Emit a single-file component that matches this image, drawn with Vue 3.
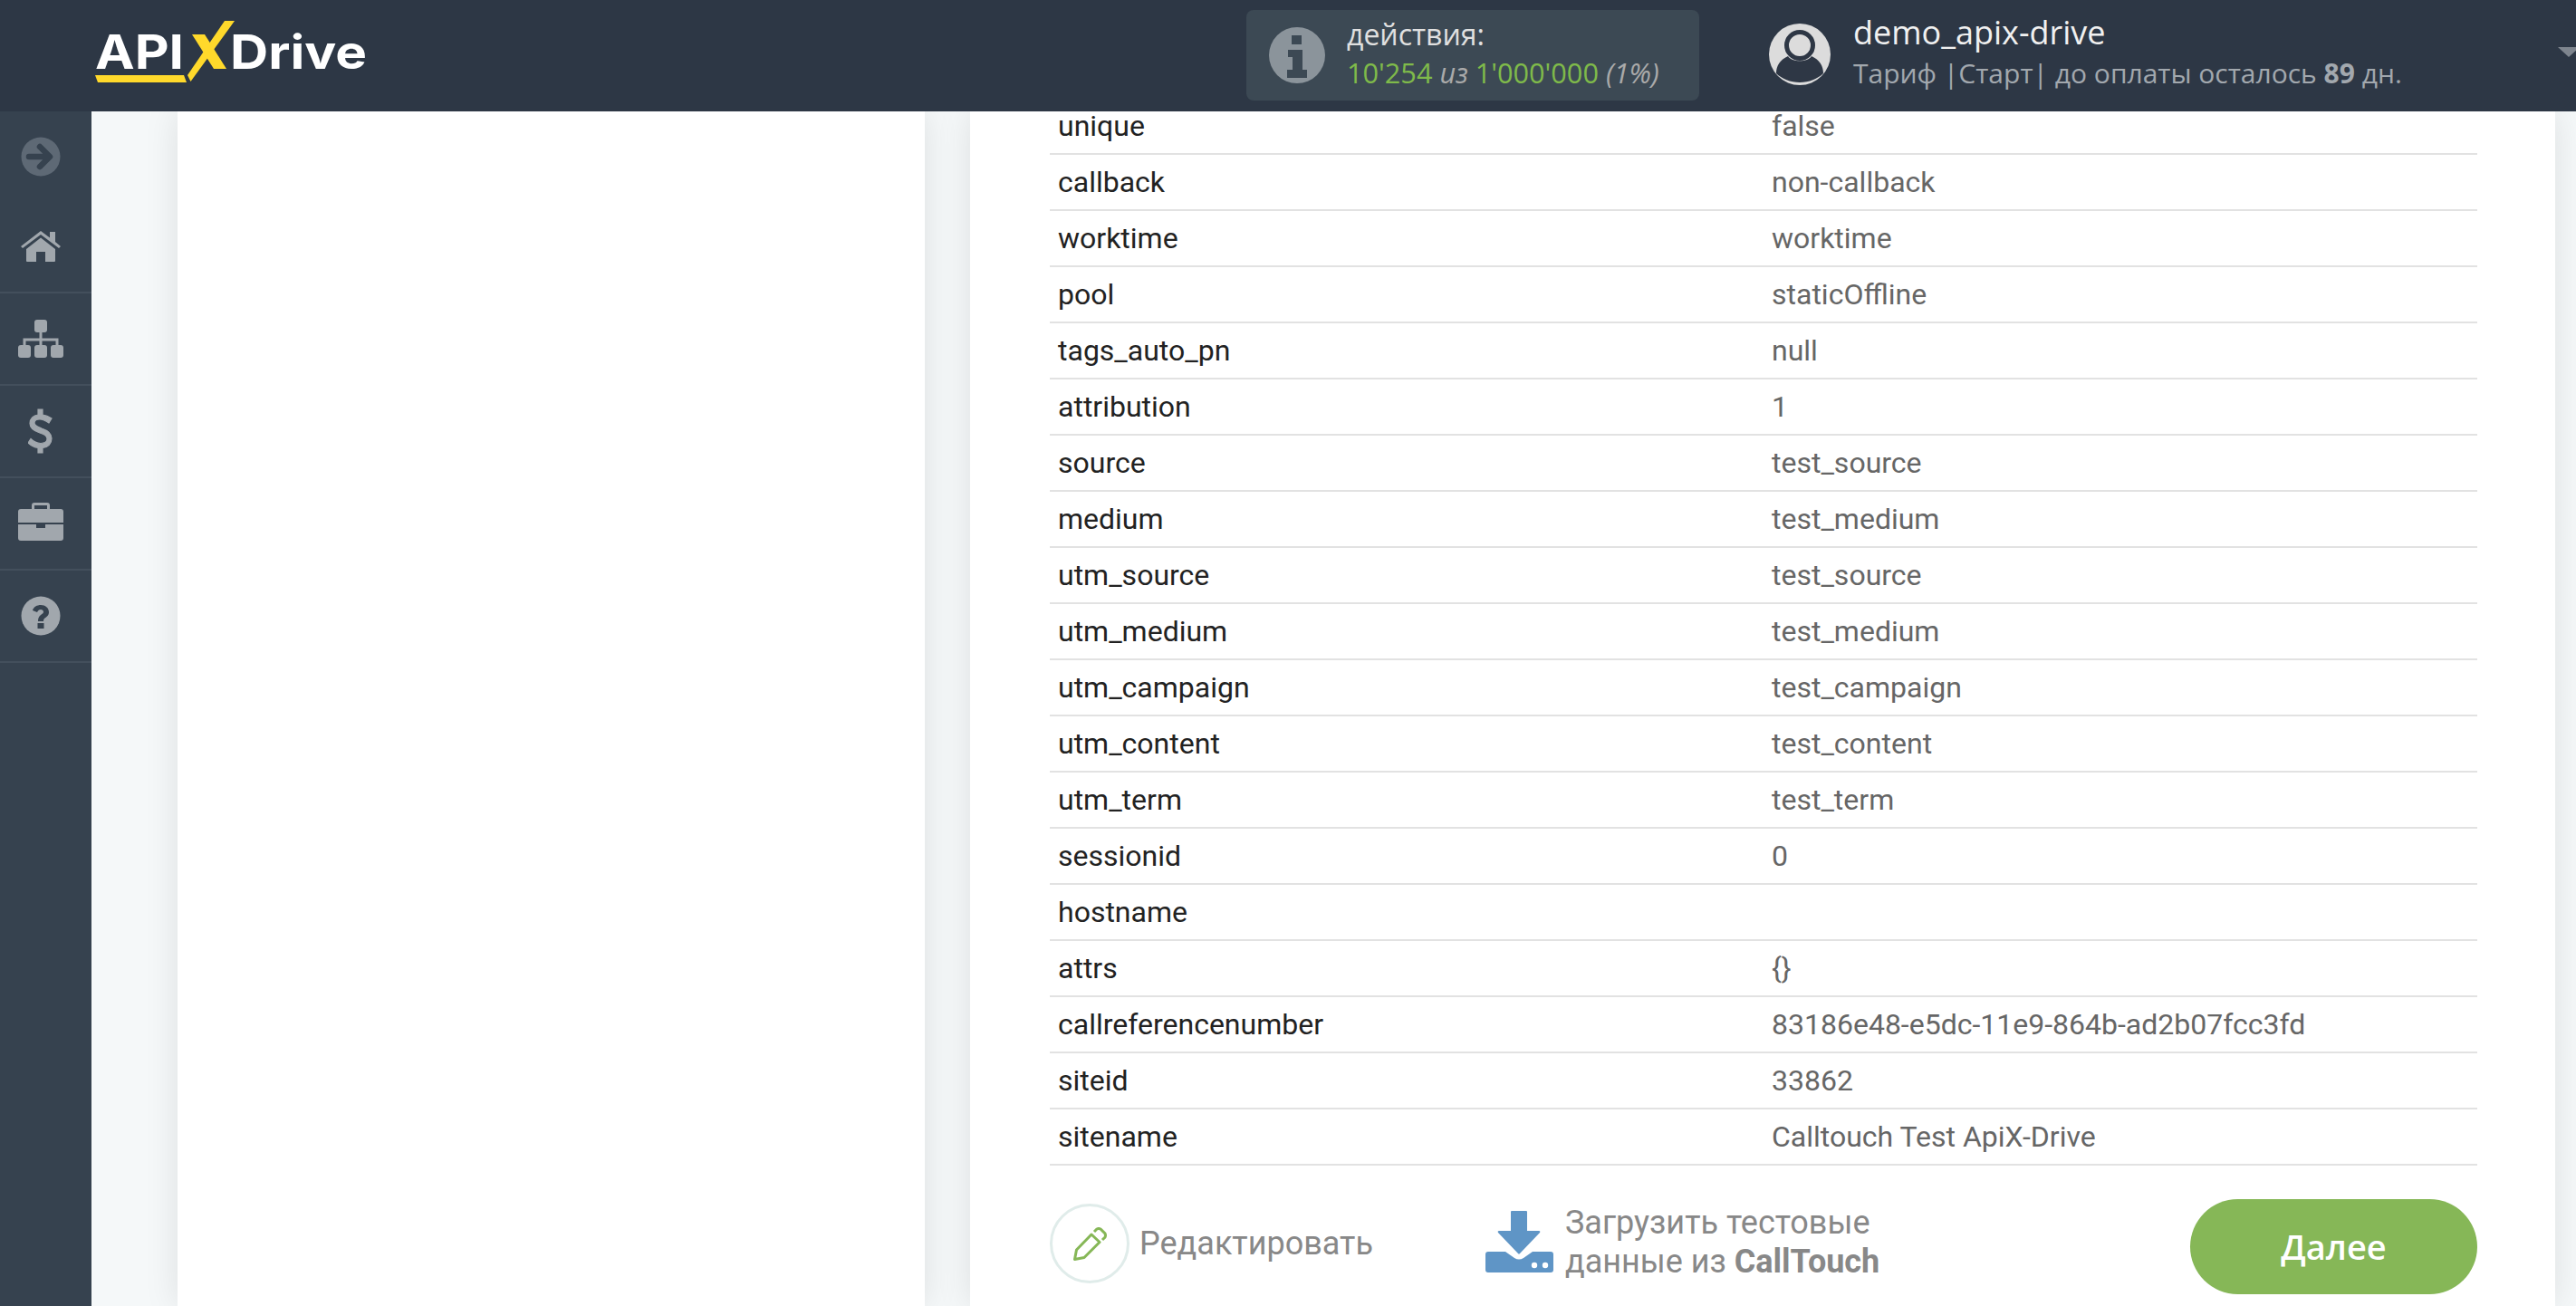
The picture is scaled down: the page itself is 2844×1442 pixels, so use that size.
<script setup>
const rows = [
  ['unique', 'false'], ['callback', 'non-callback'], ['worktime', 'worktime'], ['pool', 'staticOffline'],
  ['tags_auto_pn', 'null'], ['attribution', '1'], ['source', 'test_source'], ['medium', 'test_medium'],
  ['utm_source', 'test_source'], ['utm_medium', 'test_medium'], ['utm_campaign', 'test_campaign'],
  ['utm_content', 'test_content'], ['utm_term', 'test_term'], ['sessionid', '0'], ['hostname', ''],
  ['attrs', '{}'], ['callreferencenumber', '83186e48-e5dc-11e9-864b-ad2b07fcc3fd'], ['siteid', '33862'],
  ['sitename', 'Calltouch Test ApiX-Drive'],
]
</script>

<template>
  <div class="page">
    <header class="top">
      <div class="logo">
        <svg width="300" height="80" viewBox="0 0 300 80">
          <path d="M0 60 H98 L101 68 H3 Z" fill="#ffd92b" />
          <path d="M102 60 L143 0 H154 L105.500 67 Z" fill="#ffd92b" />
          <path d="M107 15 H121 L145 53 H131 Z" fill="#ffd92b" />
          <text x="0" y="53" class="logo-text" textLength="98" lengthAdjust="spacingAndGlyphs">API</text>
          <text x="149" y="53" class="logo-text" textLength="151" lengthAdjust="spacingAndGlyphs">Drive</text>
        </svg>
      </div>
      <div class="actions">
        <svg class="info" viewBox="0 0 62 62">
          <circle cx="31" cy="31" r="31" fill="#8b949b" />
          <path d="M25 9h11v10H25zM21 25h16v22h5v9H20v-9h6V33h-5z" fill="#3c4954" />
        </svg>
        <div class="actions-text">
          <div class="actions-label">действия:</div>
          <div class="actions-count"><span class="green">10'254</span> <i>из</i> <span class="green">1'000'000</span> <i>(1%)</i></div>
        </div>
      </div>
      <div class="user">
        <svg class="avatar" viewBox="0 0 68 68">
          <circle cx="34" cy="34" r="34" fill="#dcdcdc" />
          <circle cx="34" cy="24" r="14.500" fill="none" stroke="#2e3745" stroke-width="5" />
          <path d="M21 36 C12 40 8 47 8 55 C14 61 24 65 34 65 C44 65 54 61 60 55 C60 47 56 40 47 36 C43 43 25 43 21 36Z" fill="#2e3745" />
        </svg>
        <div class="user-text">
          <div class="user-name">demo_apix-drive</div>
          <div class="user-plan">Тариф |Старт| до оплаты осталось <b>89</b> дн.</div>
        </div>
      </div>
      <div class="caret"></div>
    </header>
    <div class="body">
      <nav class="side">
        <div class="side-item first">
          <svg viewBox="0 0 44 44" class="ico dim">
            <circle cx="22" cy="22" r="21.500" fill="#5e6975" />
            <path d="M9 22h22M21 11l11 11-11 11" fill="none" stroke="#36424f" stroke-width="6.500" stroke-linecap="round" stroke-linejoin="round" />
          </svg>
        </div>
        <div class="side-item">
          <svg viewBox="0 0 46 36" class="ico home">
            <path d="M1 18 L23 1 L33 8.500 V2 H39 V13 L45 18 L43 20 L23 5 L3 20Z" fill="#a1a7ad" />
            <path d="M7 21 L23 8.500 L39 21 V34 Q39 35 38 35 H28 V24 H18 V35 H8 Q7 35 7 34Z" fill="#a1a7ad" />
          </svg>
        </div>
        <div class="side-item">
          <svg viewBox="0 0 50 42" class="ico tree">
            <rect x="18" y="0" width="14" height="14" rx="3" fill="#a1a7ad" />
            <rect x="0" y="28" width="14" height="14" rx="3" fill="#a1a7ad" />
            <rect x="18" y="28" width="14" height="14" rx="3" fill="#a1a7ad" />
            <rect x="36" y="28" width="14" height="14" rx="3" fill="#a1a7ad" />
            <path d="M25 14v14M7 28v-6h36v6" fill="none" stroke="#a1a7ad" stroke-width="3" />
          </svg>
        </div>
        <div class="side-item">
          <svg viewBox="0 0 28 48" class="ico dollar">
            <path d="M11 0h5v6c4 .5 7 2 10 4l-3 5c-3-2-6-4-10-4-4 0-6 2-6 4 0 3 3 4 8 6 6 2 11 5 11 11 0 6-4 10-10 10.500V48h-5v-5.500C7 42 3 40 0 37l3-4.500c3 3 7 5 11 5 4 0 7-2 7-5s-3-5-8-6.500C7 24 2 21 2 15.500 2 10 6 6.500 11 6Z" fill="#a1a7ad" stroke="#a1a7ad" stroke-width="1.200" />
          </svg>
        </div>
        <div class="side-item">
          <svg viewBox="0 0 50 42" class="ico case">
            <path d="M15 8V3q0-3 3-3h14q3 0 3 3v5h-3V3H18v5Z" fill="#a1a7ad" />
            <path d="M3 7h44q3 0 3 3v12H0V10q0-3 3-3Z" fill="#a1a7ad" />
            <path d="M0 24h20v4h10v-4h20v15q0 3-3 3H3q-3 0-3-3Z" fill="#a1a7ad" />
          </svg>
        </div>
        <div class="side-item">
          <svg viewBox="0 0 44 44" class="ico">
            <circle cx="22" cy="22" r="21.500" fill="#a1a7ad" />
            <path d="M13 16c1-4 5-6 9-6 5 0 9 3 9 8 0 4-3 5-5 7-1 1-1 2-1 3h-6c0-3 .5-5 3-7 2-1.500 3-2 3-3.500 0-1.500-1.500-2.500-3-2.500-2 0-3 1-4 3ZM18.500 30h7v6h-7Z" fill="#36424f" />
          </svg>
        </div>
      </nav>
      <main class="main">
        <div class="card left"></div>
        <div class="card right">
          <div class="table">
            <div v-for="r in rows" :key="r[0]" class="row">
              <div class="key">{{ r[0] }}</div>
              <div class="val">{{ r[1] }}</div>
            </div>
          </div>
          <div class="foot">
            <div class="edit">
              <span class="edit-circle">
                <svg viewBox="0 0 37 37" class="pencil">
                  <path d="M1.500 35.500 L3.500 25 L20 8 L29 16.500 L12 33.500 Z" fill="none" stroke="#86b757" stroke-width="3" stroke-linejoin="round" />
                  <path d="M23 5 L26 2 Q28 1 30 2 L35 7 Q36 9 35 11 L32 14" fill="none" stroke="#86b757" stroke-width="3" />
                </svg>
              </span>
              <span class="edit-label">Редактировать</span>
            </div>
            <div class="load">
              <svg viewBox="0 0 75 68" class="load-ico">
                <path d="M28 1q0-1 1-1h16q1 0 1 1v21h13q2 0 1 2L38 47q-1 1-2 0L14 24q-1-2 1-2h13Z" fill="#5f95c6" />
                <path d="M3 45h19l10 7q5 3 10 0l10-7h20q3 0 3 3v17q0 3-3 3H3q-3 0-3-3V48q0-3 3-3Z" fill="#5f95c6" />
                <circle cx="54" cy="60" r="3.200" fill="#fff" /><circle cx="66" cy="60" r="3.200" fill="#fff" />
              </svg>
              <div class="load-text">Загрузить тестовые<br />данные из <b>CallTouch</b></div>
            </div>
            <div class="next">Далее</div>
          </div>
        </div>
      </main>
    </div>
  </div>
</template>

<style>
html, body { margin: 0; overflow: hidden; }
</style>

<style scoped>
.page { width: 2844px; height: 1442px; display: flex; flex-direction: column; overflow: hidden; background: #f5f8f9; font-family: Roboto, sans-serif; }
.top { height: 123px; flex: none; background: #2d3745; display: flex; align-items: flex-start; position: relative; z-index: 2; }
.logo { margin: 23px 0 0 105px; width: 300px; height: 80px; }
.logo svg { display: block; overflow: visible; }
.logo-text { font: 700 52px Inter, "Open Sans", sans-serif; fill: #fff; }
.actions { margin: 11px 0 0 971px; width: 500px; height: 100px; box-sizing: border-box; padding-left: 25px; background: #3c4954; border-radius: 8px; display: flex; align-items: center; gap: 24px; }
.info { width: 62px; height: 62px; flex: none; }
.actions-text { font-family: "Open Sans", sans-serif; color: #e0e0e0; margin-top: -5px; }
.actions-label { font-size: 32px; line-height: 41px; margin-bottom: 2px; }
.actions-count { font-size: 30.700px; line-height: 41px; color: #aaa; }
.green { color: #7fba4a; }
.user { margin: 26px 0 0 77px; display: flex; gap: 25px; }
.avatar { width: 68px; height: 68px; flex: none; }
.user-text { font-family: "Open Sans", sans-serif; margin-top: -15px; }
.user-name { font-size: 36px; line-height: 49px; color: #f0f0f0; }
.user-plan { font-size: 30px; line-height: 41px; color: #a2a8ae; }
.caret { position: absolute; right: -4px; top: 52px; width: 0; height: 0; border-left: 12px solid transparent; border-right: 12px solid transparent; border-top: 11px solid #7e858e; }
.body { flex: 1; display: flex; min-height: 0; }
.side { width: 101px; flex: none; background: #36424f; }
.side-item { height: 100px; padding-right: 11px; display: flex; align-items: center; justify-content: center; border-bottom: 2px solid #434f5c; }
.side-item.first { height: 99px; border: 0; }
.ico { width: 44px; height: 44px; }
.home { width: 46px; height: 36px; }
.tree { width: 50px; height: 42px; }
.dollar { width: 28px; height: 50px; }
.case { width: 50px; height: 42px; margin-top: -4px; }
.main { flex: 1; display: flex; min-width: 0; padding-left: 95px; }
.card { background: #fff; box-shadow: 0 0 36px rgba(0,0,0,.1); }
.left { width: 825px; flex: none; }
.right { margin-left: 50px; width: 1750px; box-sizing: border-box; padding: 0 86px 0 88px; }
.table { margin-top: -14px; }
.row { height: 60px; border-bottom: 2px solid #e2e2e2; display: flex; font-size: 32px; line-height: 60px; }
.key { width: 797px; padding-left: 9px; box-sizing: border-box; color: #222; }
.val { color: #666; }
.foot { display: flex; align-items: flex-start; }
.edit { display: flex; align-items: center; margin-top: 42px; gap: 11px; }
.edit-circle { width: 88px; height: 88px; box-sizing: border-box; border: 3px solid #e0ecea; border-radius: 50%; display: flex; align-items: center; justify-content: center; }
.pencil { width: 37px; height: 37px; }
.edit-label { font-size: 36px; color: #888; }
.load { display: flex; margin: 50px 0 0 124px; gap: 13px; }
.load-ico { width: 75px; height: 68px; flex: none; }
.load-text { font-size: 36px; line-height: 43px; color: #888; margin-top: -8px; }
.load-text b { font-weight: 700; }
.next { margin: 37px 0 0 auto; width: 317px; height: 105px; border-radius: 53px; background: #86b757; color: #fff; font: 600 38px/105px "Open Sans", sans-serif; text-align: center; }
</style>
